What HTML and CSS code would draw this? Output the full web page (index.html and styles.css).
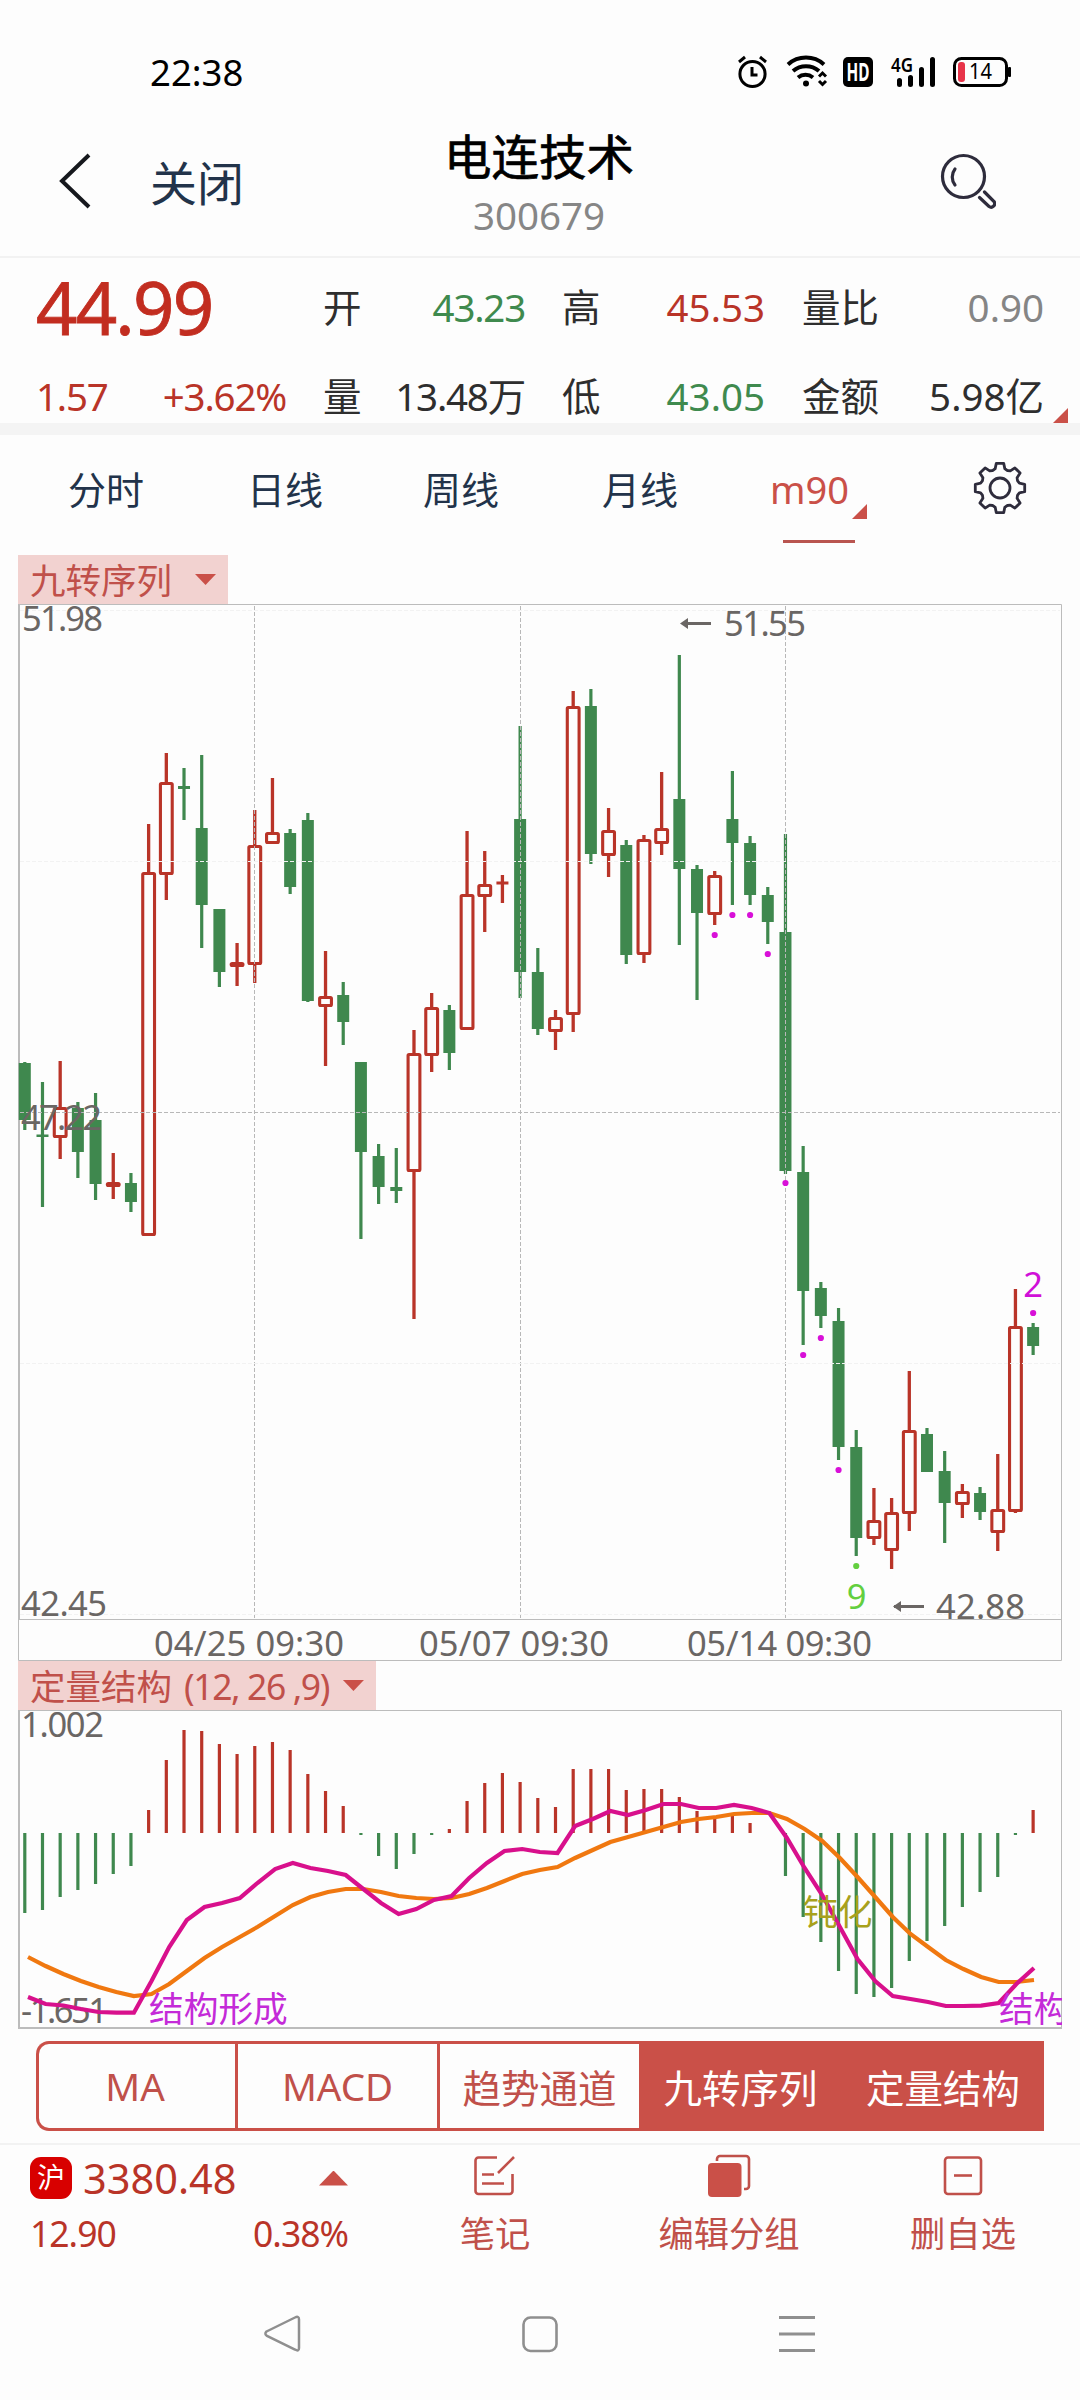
FILE: index.html
```html
<!DOCTYPE html>
<html lang="zh-CN">
<head>
  <meta charset="UTF-8" />
  <meta name="viewport" content="width=device-width, initial-scale=1.0"/>
  <title>电连技术 300679</title>
  <link rel="stylesheet" href="styles.css">
</head>
<body>
  <div class="status">
    <span class="clock">22:38</span>
    <svg class="status-icons" width="280" height="40" viewBox="734 52 280 40">
      <g fill="none" stroke="#000" stroke-width="3">
        <circle cx="752.5" cy="74" r="12.6"/>
        <path d="M739 62l6-5M766 62l-6-5M752 67v8h5.500"/>
        <path d="M788 64.500a27 27 0 0 1 36 0M793 71a20 20 0 0 1 26 0M798 77.500a12 12 0 0 1 15 0" stroke-width="4"/>
        <path d="M819 76.500l3.500-3.500 3.500 3.500M819 81l3.500 3.500 3.500-3.500"/>
      </g>
      <circle cx="806" cy="83.500" r="3"/>
      <rect x="843" y="57" width="30" height="30" rx="5"/>
      <text class="hd" x="846.500" y="80.500" textLength="23" lengthAdjust="spacingAndGlyphs">HD</text>
      <text class="net" x="891" y="71.500" textLength="22" lengthAdjust="spacingAndGlyphs">4G</text>
      <g stroke="#000" stroke-width="5" stroke-linecap="round">
        <path d="M899.500 80.500v4M910.500 77.500v7M921.500 69.500v15M932.500 59.500v25"/>
      </g>
      <rect x="954.500" y="58.500" width="52" height="27" rx="7" fill="none" stroke="#000" stroke-width="3"/>
      <rect x="958" y="62" width="7" height="20" rx="3" fill="#e8344a"/>
      <rect x="1008" y="67" width="3" height="10" rx="1"/>
      <text class="bat" x="969" y="79" textLength="23" lengthAdjust="spacingAndGlyphs">14</text>
    </svg>
  </div>

  <header class="header">
    <svg class="back" width="32" height="56" viewBox="0 0 32 56"><path d="M30 2L3 28l27 26" fill="none" stroke="#16181d" stroke-width="4"/></svg>
    <span class="close">关闭</span>
    <div class="title">
      <h1>电连技术</h1>
      <p>300679</p>
    </div>
    <svg class="search" width="56" height="56" viewBox="940 153 56 56">
      <g fill="none" stroke="#2e2c3c" stroke-width="3.200" stroke-linecap="round">
        <circle cx="963.500" cy="176.500" r="21"/>
        <path d="M955 169a13 13 0 0 0 0 16"/>
        <path d="M979.500 197.500l9.500 9a3.600 3.600 0 0 0 5-5L984.500 192"/>
      </g>
    </svg>
  </header>

  <section class="quote">
    <div class="price up">44.99</div>
    <div class="stat tight"><span>开</span><b class="down">43.23</b></div>
    <div class="stat"><span>高</span><b class="up">45.53</b></div>
    <div class="stat"><span>量比</span><b class="flat">0.90</b></div>
    <div class="stat tight up"><b>1.57</b><b>+3.62%</b></div>
    <div class="stat tight"><span>量</span><b>13.48万</b></div>
    <div class="stat"><span>低</span><b class="down">43.05</b></div>
    <div class="stat"><span>金额</span><b>5.98亿</b></div>
    <i class="corner"></i>
  </section>

  <nav class="tabs">
    <span>分时</span>
    <span>日线</span>
    <span>周线</span>
    <span>月线</span>
    <span class="active">m90<i class="corner"></i></span>
    <svg class="gear" width="54" height="54" viewBox="-27 -27 54 54">
      <g fill="none" stroke="#2e2c3c" stroke-width="2.800" stroke-linejoin="round">
        <circle r="10"/>
        <path id="gear"/>
      </g>
    </svg>
  </nav>

  <div class="tag wide">九转序列<i class="caret"></i></div>
  <svg id="kline" class="chart" width="1080" height="1057" viewBox="0 604 1080 1057">
    <g class="frame">
      <path d="M18 604.500H1061.500V1660.500H18.500V604"/>
      <path d="M18 1619.500H1062"/>
      <path d="M19 605V1619" stroke-width="2"/>
    </g>
    <g id="candles"></g>
    <path class="grid" d="M254.500 606V1618M520.500 606V1618M785.500 606V1618M20 1112.500H1060"/>
    <path class="grid light" d="M20 610.500H1060M20 861.500H1060M20 1363.500H1060M20 1614.500H1060"/>
    <g id="dots"></g>
    <g class="axis">
      <text x="22" y="631" textLength="81">51.98</text>
      <text x="21" y="1130" textLength="81">47.22</text>
      <text x="21" y="1616" textLength="86">42.45</text>
      <text x="154" y="1656" textLength="190">04/25 09:30</text>
      <text x="419" y="1656" textLength="190">05/07 09:30</text>
      <text x="687" y="1656" textLength="185">05/14 09:30</text>
      <text x="724" y="636" textLength="82">51.55</text>
      <text x="936" y="1619" textLength="89">42.88</text>
    </g>
    <g class="arrow">
      <path d="M685 623.500H711M894 1606.500H924" stroke-width="2.800"/>
      <path d="M680 623.500l8-5.500v11zM893 1606.500l8-5.500v11z" stroke="none" fill="#6a6664"/>
    </g>
    <text class="mark" x="1033" y="1297" fill="#d010d8">2</text>
    <text class="mark" x="856.500" y="1609" fill="#63cf3f">9</text>
  </svg>

  <div class="tag">定量结构<span class="params">(12, 26 ,9)</span><i class="caret"></i></div>
  <svg id="macd" class="chart" width="1080" height="319" viewBox="0 1710 1080 319">
    <g class="axis">
      <text x="21" y="1737" textLength="83">1.002</text>
      <text x="21" y="2023" textLength="87">-1.651</text>
    </g>
    <g id="bars"></g>
    <polyline id="dea" class="line" stroke="#f07810"/>
    <polyline id="dif" class="line" stroke="#d8108c"/>
    <g class="frame">
      <path d="M18 1710.500H1061.500V2028"/>
      <path d="M19 1710V2028H1062" stroke-width="2"/>
    </g>
    <text class="note" x="149" y="2022" fill="#c42ad8">结构形成</text>
    <text class="note" x="803" y="1925" fill="#a8a11c">钝化</text>
    <svg x="990" y="1980" width="72" height="48"><text class="note" x="9" y="42" fill="#c42ad8">结构形成</text></svg>
  </svg>

  <div class="switches">
    <span class="first">MA</span>
    <span>MACD</span>
    <span>趋势通道</span>
    <span class="on">九转序列</span>
    <span class="on last">定量结构</span>
  </div>

  <footer class="footer">
    <div class="index up">
      <div class="index-row"><i class="badge">沪</i><b>3380.48</b><i class="rise"></i></div>
      <div class="index-row small"><span>12.90</span><span>0.38%</span></div>
    </div>
    <div class="action">
      <svg width="44" height="44" viewBox="474 2154 44 44">
        <path d="M498 2157.500H479.500a3 3 0 0 0-3 3V2191a3 3 0 0 0 3 3H510.500a3 3 0 0 0 3-3V2174M515 2157L499 2173M483 2174.500h12M483 2183.500h22" fill="none" stroke="#c0504a" stroke-width="2.600"/>
      </svg>
      <span>笔记</span>
    </div>
    <div class="action">
      <svg width="44" height="44" viewBox="707 2154 44 44">
        <path d="M717 2161v-2a3 3 0 0 1 3-3H746a3 3 0 0 1 3 3V2186a3 3 0 0 1-3 3h-2" fill="none" stroke="#c0504a" stroke-width="2.600"/>
        <rect x="707" y="2162" width="36" height="36" rx="4" fill="#fdfdfd"/>
        <rect x="708" y="2163" width="33.500" height="34" rx="4" fill="#ca5048"/>
      </svg>
      <span>编辑分组</span>
    </div>
    <div class="action remove">
      <svg width="44" height="44" viewBox="941 2154 44 44">
        <rect x="945" y="2157.500" width="36" height="36.500" rx="3" fill="none" stroke="#c0504a" stroke-width="2.600"/>
        <path d="M954 2175.500h18" stroke="#c0504a" stroke-width="2.600"/>
      </svg>
      <span>删自选</span>
    </div>
  </footer>

  <div class="sysnav">
    <svg width="40" height="40" viewBox="263 2314 40 40"><path d="M266.500 2331.500L295 2317.500q4-2 4 2V2348q0 4-4 1.500L267 2336q-3-2 -.5-4.500z" fill="none" stroke="#8f8f8f" stroke-width="2.500"/></svg>
    <svg width="40" height="40" viewBox="520 2314 40 40"><rect x="523.500" y="2317.500" width="33" height="33.500" rx="7" fill="none" stroke="#8f8f8f" stroke-width="2.600"/></svg>
    <svg width="40" height="40" viewBox="778 2314 40 40"><path d="M780 2317.500h36M780 2334h36M780 2350.500h36" stroke="#8f8f8f" stroke-width="3"/></svg>
  </div>

  <script src="chart.js"></script>
</body>
</html>
```

FILE: styles.css
```css
* {
  box-sizing: border-box;
}

body {
  margin: 0;
  width: 1080px;
  height: 2400px;
  overflow: hidden;
  background: #fdfdfd;
  color: #2e2e2e;
  font-family: "Noto Sans", "Noto Sans CJK SC", sans-serif;
}

svg {
  display: block;
}

b, i {
  font-weight: normal;
  font-style: normal;
}

.up {
  color: #b93428;
}

.down {
  color: #3f8a4e;
}

.flat {
  color: #858585;
}

/* status bar */
.status {
  height: 144px;
  padding: 0 66px 0 150px;
  display: flex;
  justify-content: space-between;
  align-items: center;
  color: #000;
}

.clock {
  font-size: 36.5px;
}

.hd {
  font-size: 25px;
  font-weight: bold;
  fill: #fff;
}

.net {
  font-size: 20px;
  font-weight: 600;
}

.bat {
  font-size: 22px;
}

/* header */
.header {
  height: 115px;
  margin-top: -1px;
  padding: 10px 84px 0 59px;
  display: grid;
  grid-template-columns: 91px 220px 338px 1fr;
  align-items: start;
  border-bottom: 2px solid #f2f2f2;
}

.close {
  font-size: 47px;
  line-height: 60px;
  color: #22334a;
}

.title {
  margin-top: -28px;
  text-align: center;
}

.title h1 {
  margin: 0;
  font-size: 47.5px;
  line-height: 64px;
  font-weight: normal;
  -webkit-text-stroke: 0.7px #000;
  color: #000;
}

.title p {
  margin: 0;
  font-size: 38.5px;
  line-height: 52px;
  color: #868686;
}

.search {
  justify-self: end;
}

/* quote */
.quote {
  position: relative;
  height: 177px;
  padding: 5px 37px 0 36px;
  display: grid;
  grid-template-columns: 250px 202px 203px 242px;
  grid-template-rows: 88px 90px;
  column-gap: 37px;
  align-items: center;
  border-bottom: 12px solid #f4f4f4;
}

.price {
  font-size: 72.5px;
  line-height: 80px;
  letter-spacing: -1.8px;
  -webkit-text-stroke: 0.8px #c22d20;
  color: #c22d20;
}

.stat {
  display: flex;
  justify-content: space-between;
  font-size: 38.5px;
  line-height: 50px;
  white-space: nowrap;
}

.stat.tight b {
  letter-spacing: -1.2px;
}

.corner {
  position: absolute;
  right: 12px;
  bottom: 0;
  width: 15px;
  height: 15px;
  background: #ca5048;
  clip-path: polygon(100% 0, 100% 100%, 0 100%);
}

/* period tabs */
.tabs {
  height: 120px;
  padding: 26px 53px 0 68px;
  display: grid;
  grid-template-columns: 179px 176px 179px 168px 1fr 54px;
  align-items: start;
  font-size: 38px;
  line-height: 56px;
  color: #22334a;
}

.tabs .active {
  position: relative;
  width: 82px;
  height: 82px;
  color: #ca5048;
}

.tabs .active::after {
  content: "";
  position: absolute;
  left: 13px;
  bottom: 0;
  width: 72px;
  height: 3px;
  background: #b95550;
}

.tabs .corner {
  right: -15px;
  bottom: 24px;
}

/* indicator name tags */
.tag {
  width: fit-content;
  height: 49px;
  margin-left: 18px;
  padding: 2px 12px 0;
  display: flex;
  align-items: center;
  gap: 14px;
  background: #f2d2d0;
  color: #c0504a;
  font-size: 35.5px;
  line-height: 47px;
  white-space: nowrap;
}

.tag.wide {
  gap: 23px;
}

.params {
  margin-left: -2px;
  letter-spacing: -1.4px;
}

.caret {
  width: 21px;
  height: 11px;
  margin-top: -2px;
  background: #ca5048;
  clip-path: polygon(0 0, 100% 0, 50% 100%);
}

/* charts */
.frame {
  fill: none;
  stroke: #bcbcbc;
}

.grid {
  fill: none;
  stroke: #b8b8b8;
  stroke-dasharray: 4 2;
}

.grid.light {
  stroke: #f2f2f2;
}

.axis text {
  font-size: 34.5px;
  fill: #6a6664;
}

.mark {
  font-size: 34.5px;
  text-anchor: middle;
}

.note {
  font-size: 34.7px;
}

.arrow {
  stroke: #6a6664;
}

.line {
  fill: none;
  stroke-width: 4.2;
}

/* indicator switches */
.switches {
  width: 1008px;
  height: 90px;
  margin: 12px 0 0 36px;
  display: grid;
  grid-template-columns: 199px 202px 202px 200px 1fr;
  border: 3px solid #ca5048;
  border-right: none;
  border-radius: 13px 0 0 13px;
  font-size: 38.5px;
  color: #c0504a;
}

.switches span {
  display: flex;
  align-items: center;
  justify-content: center;
  border-right: 3px solid #ca5048;
}

.switches .first {
  padding-right: 4px;
}

.switches .on {
  background: #ca5048;
  color: #fff;
}

.switches .last {
  border-right: none;
}

/* footer */
.footer {
  height: 134px;
  margin-top: 12px;
  padding: 9px 0 0 30px;
  display: grid;
  grid-template-columns: 318px 294px 174px 264px;
  border-top: 2px solid #f2f2f2;
}

.index-row {
  height: 48px;
  display: flex;
  align-items: center;
  font-size: 41.5px;
}

.index-row.small {
  height: 62px;
  justify-content: space-between;
  font-size: 35.5px;
  letter-spacing: -1px;
}

.badge {
  width: 42px;
  height: 42px;
  margin-right: 11px;
  border-radius: 11px;
  background: #d80000;
  color: #fff;
  font-size: 28px;
  line-height: 41px;
  text-align: center;
}

.rise {
  width: 29px;
  height: 15px;
  margin-left: auto;
  background: #ca5048;
  clip-path: polygon(50% 0, 100% 100%, 0 100%);
}

.action {
  display: flex;
  flex-direction: column;
  align-items: center;
  color: #c0504a;
  font-size: 35.3px;
}

.action span {
  margin-top: 4px;
  line-height: 62px;
}

.remove {
  padding-left: 30px;
}

/* android navigation */
.sysnav {
  margin-top: 37px;
  padding-left: 263px;
  display: flex;
  gap: 217px;
}
```

FILE: chart.js
```js
// [color, high, body top, body bottom, low]
const candles = [
  ['g', 1062, 1063, 1120, 1130], ['g', 1082, 1134.5, 1137, 1207], ['r', 1061, 1107, 1138, 1159],
  ['g', 1102, 1108, 1152, 1178], ['g', 1093, 1120, 1184, 1200], ['r', 1153, 1182, 1187, 1199],
  ['g', 1173, 1183, 1202, 1212], ['r', 824, 872, 1236, 1236], ['r', 753, 782, 875, 900],
  ['g', 768, 786, 789, 820], ['g', 755, 828, 905, 948], ['g', 909, 909, 972, 987],
  ['r', 943, 962, 967, 986], ['r', 810, 845, 965, 983], ['r', 778, 832, 844, 844],
  ['g', 829, 833, 887, 894], ['g', 813, 820, 1001, 1002], ['r', 951, 996, 1007, 1066],
  ['g', 982, 995, 1022, 1045], ['g', 1062, 1062, 1152, 1239], ['g', 1144, 1156, 1187, 1204],
  ['g', 1148, 1187, 1191, 1203], ['r', 1030, 1053, 1172, 1319], ['r', 993, 1007, 1056, 1072],
  ['g', 1005, 1010, 1053, 1070], ['r', 831, 894, 1030, 1030], ['r', 851, 884, 897, 932],
  ['r', 875, 881.5, 884, 903], ['g', 726, 819, 972, 998], ['g', 948, 972, 1029, 1035],
  ['r', 1010, 1017, 1032, 1050], ['r', 691, 706, 1015, 1032], ['g', 689, 706, 854, 864],
  ['r', 808, 830, 856, 877], ['g', 840, 845, 955, 964], ['r', 835, 839, 955, 963],
  ['r', 772, 828, 844, 855], ['g', 655, 799, 869, 945], ['g', 865, 869, 913, 1000],
  ['r', 871, 875, 915, 925], ['g', 771, 819, 843, 905], ['g', 836, 843, 895, 905],
  ['g', 887, 895, 922, 944], ['g', 834, 932, 1171, 1174], ['g', 1146, 1172, 1291, 1345],
  ['g', 1282, 1288, 1316, 1328], ['g', 1308, 1321, 1447, 1460], ['g', 1430, 1447, 1538, 1556],
  ['r', 1488, 1520, 1539, 1545], ['r', 1498, 1512, 1551, 1569], ['r', 1371, 1430, 1514, 1531],
  ['g', 1428, 1434, 1472, 1472], ['g', 1451, 1471, 1503, 1543], ['r', 1484, 1491, 1505, 1518],
  ['g', 1487, 1493, 1512, 1520], ['r', 1454, 1509, 1533, 1551], ['r', 1289, 1326, 1512, 1513],
  ['g', 1323, 1327, 1346, 1355]
];

// candle index -> y of the sequence dot
const dots = [[39, 935], [40, 915], [41, 915], [42, 954], [43, 1183], [44, 1355], [45, 1338], [46, 1470], [47, 1566], [57, 1313]];

const zero = 1833;
const bars = [1913, 1910, 1897, 1890, 1884, 1874, 1866, 1810, 1760, 1730, 1731, 1744, 1754, 1746, 1742, 1750, 1774, 1791, 1806,
  1835, 1856, 1869, 1854, 1835, 1829, 1801, 1783, 1773, 1782, 1798, 1807, 1769, 1769, 1769, 1790, 1789, 1789, 1797, 1811, 1819,
  1816, 1823, 1833, 1876, 1917, 1942, 1971, 1994, 1997, 1988, 1961, 1941, 1926, 1907, 1892, 1877, 1835, 1810];

const dif = [1997, 2004, 2005.5, 2009, 2012, 2012.7, 2012.7, 1981, 1947, 1920, 1907, 1903, 1898, 1883, 1869, 1863, 1868, 1871,
  1875, 1889, 1903, 1914, 1909, 1900, 1896, 1878, 1863, 1851, 1849, 1852, 1853, 1826, 1819, 1811, 1815, 1810, 1804, 1804, 1808,
  1808, 1805, 1808, 1813, 1838, 1868, 1895, 1927, 1959, 1981, 1996, 1999, 2002, 2006, 2006, 2005.7, 2003, 1984, 1968];

const dea = [1957, 1966, 1974, 1981, 1987, 1992, 1996, 1994, 1984, 1971, 1958, 1947, 1937, 1927, 1916, 1905, 1897, 1892, 1889,
  1889, 1892, 1896, 1898, 1899, 1898, 1894, 1888, 1881, 1874, 1870, 1867, 1858, 1850, 1842, 1837, 1832, 1827, 1822, 1819, 1817,
  1814, 1813, 1813, 1819, 1829, 1841, 1858, 1877, 1897, 1917, 1934, 1947, 1960, 1969, 1977, 1982, 1982, 1980];

const red = '#b93428';
const green = '#3f884e';

function xAt(i) {
  return 24.8 + i * 17.69;
}

function candle(c, i) {
  const [type, high, top, bottom, low] = c;
  const x = xAt(i);
  const h = bottom - top;
  if (type === 'g') {
    return `<path d="M${x} ${high}V${low}" stroke="${green}" stroke-width="3.2"/>
      <rect x="${x - 6}" y="${top}" width="12" height="${h}" fill="${green}"/>`;
  }
  const wicks = `<path d="M${x} ${high}V${top + 1}M${x} ${bottom - 1}V${low}" stroke="${red}" stroke-width="3.3"/>`;
  if (h < 3) {
    return wicks + `<rect x="${x - 6}" y="${top}" width="12" height="3" fill="${red}"/>`;
  }
  return wicks + `<rect x="${x - 5.9}" y="${top + 1.5}" width="11.8" height="${h - 3}" rx="1" fill="none" stroke="${red}" stroke-width="3.1"/>`;
}

function bar(y, i) {
  return `<path d="M${xAt(i)} ${zero}V${y}" stroke="${y < zero ? red : green}" stroke-width="3.2"/>`;
}

function points(values) {
  return values.map((y, i) => (28 + i * 17.65).toFixed(1) + ',' + y).join(' ');
}

document.getElementById('candles').innerHTML = candles.map(candle).join('');
document.getElementById('dots').innerHTML = dots.map(([i, y]) =>
  `<circle cx="${xAt(i)}" cy="${y}" r="3.1" fill="${i === 47 ? '#63cf3f' : '#d810d8'}"/>`).join('');
document.getElementById('bars').innerHTML = bars.map(bar).join('');
document.getElementById('dif').setAttribute('points', points(dif));
document.getElementById('dea').setAttribute('points', points(dea));

// eight teeth, each spans 45 degrees
let gear = '';
for (let k = 0; k < 8; k++) {
  [[-22, 19], [-14, 20], [-8.5, 25], [8.5, 25], [14, 20], [22, 19]].forEach(([deg, r]) => {
    const a = (k * 45 + deg) * Math.PI / 180;
    gear += (gear ? 'L' : 'M') + (r * Math.sin(a)).toFixed(1) + ' ' + (-r * Math.cos(a)).toFixed(1);
  });
}
document.getElementById('gear').setAttribute('d', gear + 'Z');
```
